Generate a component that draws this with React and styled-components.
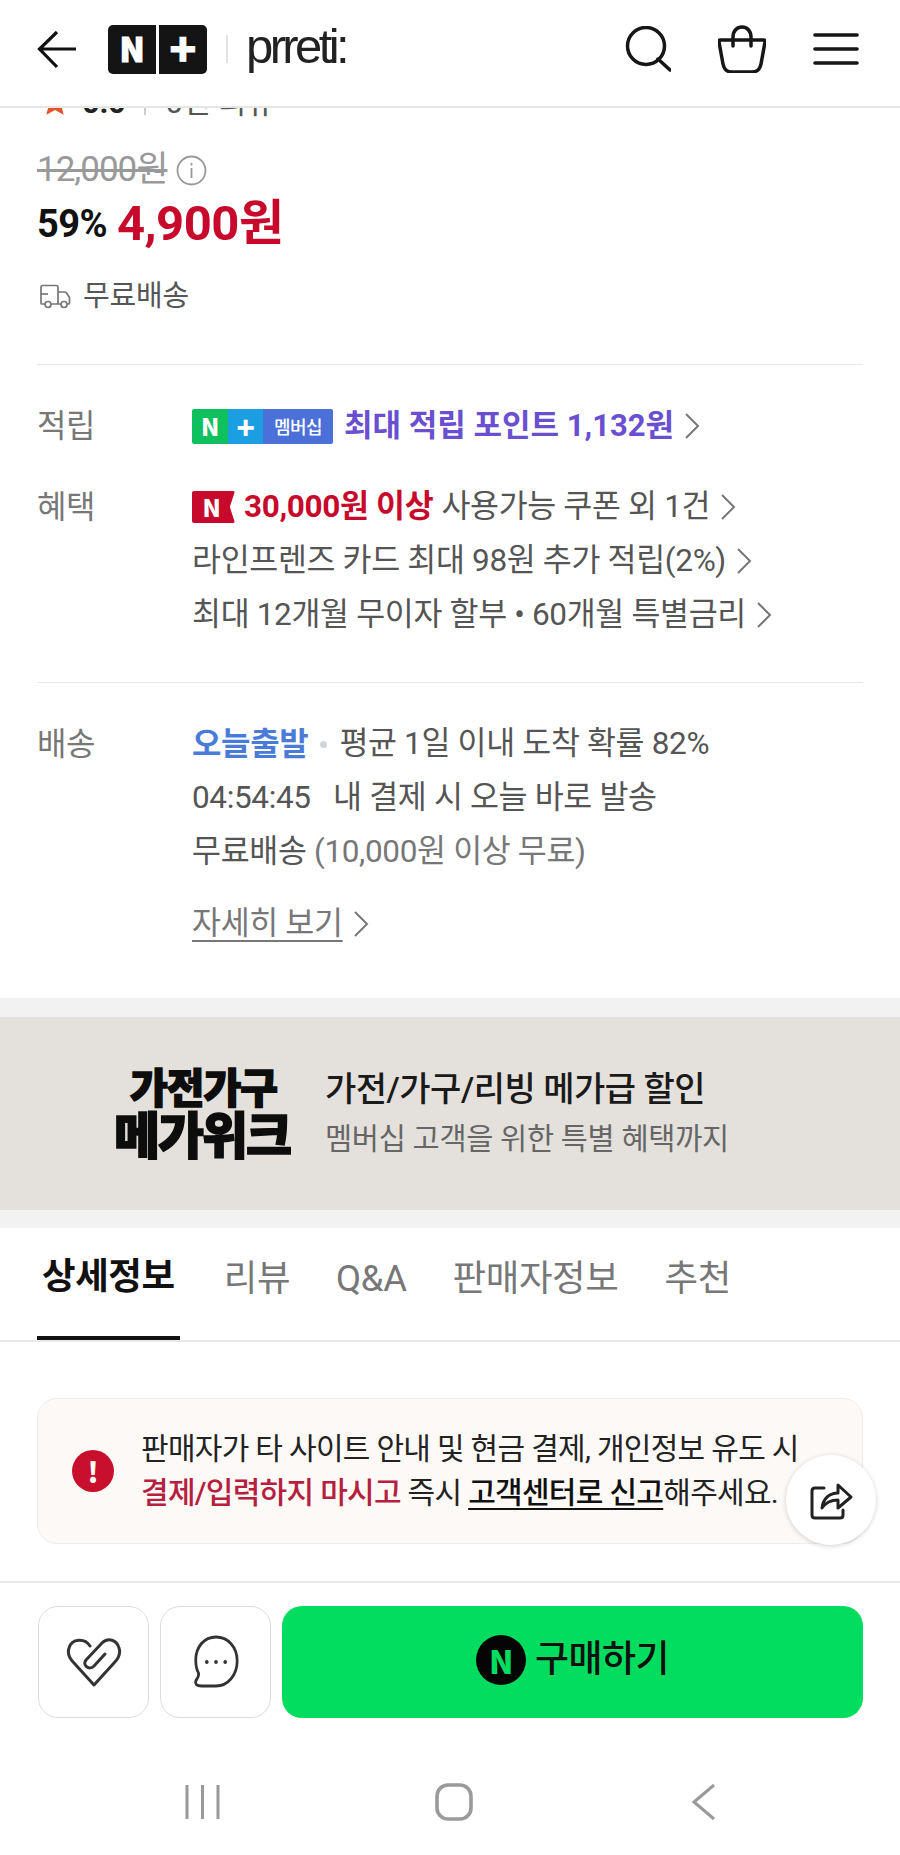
import React from "react";
import styled, { createGlobalStyle } from "styled-components";

const Global = createGlobalStyle`
  html, body { margin: 0; padding: 0; background: #fff; }
  * { box-sizing: border-box; }
  body { font-family: Roboto, "Noto Sans CJK KR", sans-serif; }
`;
const Page = styled.div`
  width: 900px; height: 1855px; display: flex; flex-direction: column; overflow: hidden; background: #fff;
`;
const Header = styled.header`
  height: 108px; flex: none; display: flex; align-items: center; position: relative; z-index: 2;
  background: #fff; border-bottom: 2px solid #e6e6e6; padding: 0 41px 8px 36px;
`;
const BackIcon = styled.svg`width: 42px; height: 40px; flex: none;`;
const LogoBox = styled.div`
  display: flex; gap: 3px; margin-left: 30px; flex: none; height: 49px;
`;
const LogoCell = styled.span`
  width: ${p => p.$w}px; background: #141414; color: #fff; font-weight: 900; font-size: ${p => p.$fs}px; line-height: ${p => p.$lh}px;
  text-align: center; font-family: "Noto Sans CJK KR", sans-serif; -webkit-text-stroke: 1px #fff;
  border-radius: ${p => p.$r};
`;
const LogoSep = styled.span`width: 2px; height: 28px; background: #e2e2e2; margin: 0 18px 0 19px; flex: none;`;
const Brand = styled.span`
  font-family: "Liberation Sans", sans-serif; font-size: 49px; letter-spacing: -3.6px; color: #222; line-height: 49px; font-weight: 400;
  position: relative; top: -3px;
`;
const HeaderIcons = styled.div`margin-left: auto; display: flex; align-items: center; gap: 47px;`;
const IconSvg = styled.svg`display: block; flex: none;`;

const Main = styled.main`flex: 1; min-height: 0; overflow: hidden;`;
const Rating = styled.div`
  height: 40px; margin-top: -25px; padding-left: 40px; display: flex; align-items: center; gap: 12px;
  font-size: 31px; color: #555; line-height: 40px; letter-spacing: -0.4px;
`;
const Score = styled.b`color: #222; font-weight: 700;`;
const RatingSep = styled.span`width: 2px; height: 24px; background: #ccc; margin: 0 7px;`;
const Price = styled.section`padding: 25px 37px 0; `;
const OldRow = styled.div`display: flex; align-items: center; gap: 9px; height: 44px;`;
const OldPrice = styled.s`font-size: 35px; line-height: 44px; color: #999; letter-spacing: -1px; text-decoration-thickness: 2.5px;`;
const SaleRow = styled.div`display: flex; align-items: center; gap: 10px; height: 60px; margin-top: 2px;`;
const Percent = styled.span`font-size: 38px; line-height: 60px; font-weight: 700; color: #111; letter-spacing: -0.6px;`;
const SalePrice = styled.span`font-size: 49px; line-height: 60px; font-weight: 700; color: #c70a2c; letter-spacing: -0.5px;`;
const ShipRow = styled.div`display: flex; align-items: center; gap: 12px; height: 44px; margin-top: 20px; padding-left: 3px; font-size: 29px; line-height: 44px; color: #555; letter-spacing: -0.2px;`;
const Divider = styled.hr`border: 0; height: 1px; background: #e8e8e8; margin: ${p => p.$m || "0 37px"};`;

const InfoSection = styled.section`padding: 34px 37px ${p => p.$pb}px; display: flex; flex-direction: column; gap: 27px;`;
const Row = styled.div`display: grid; grid-template-columns: 155px 1fr;`;
const Label = styled.div`font-size: 32px; line-height: 54px; color: #777; letter-spacing: -0.4px;`;
const Lines = styled.div`display: flex; flex-direction: column;`;
const Line = styled.div`
  display: flex; align-items: center; height: ${p => p.$h || 54}px; font-size: 31.5px; line-height: 54px; color: #555; white-space: pre;
  letter-spacing: -0.35px; margin-top: ${p => p.$mt || 0}px;
`;
const Purple = styled.span`color: #6a4fd1; font-weight: 700; margin-left: 11px; font-size: 31px; letter-spacing: 0;`;
const Crimson = styled.b`color: #c70a2c; font-weight: 700; margin: 0 8px 0 9px;`;
const Blue = styled.b`color: #4a7bd8; font-weight: 700; font-size: 32px;`;
const Dot = styled.i`width: 7px; height: 7px; border-radius: 50%; background: #cfd6da; margin: 0 12px 0 12px;`;
const Muted = styled.span`color: #777;`;
const MoreLink = styled.span`color: #777; text-decoration: underline; text-underline-offset: 6px; text-decoration-thickness: 2px;`;

const PlusBadge = styled.span`display: inline-flex; height: 35px; border-radius: 2px; overflow: hidden; flex: none;`;
const BadgeCell = styled.span`
  width: ${p => p.$w}px; background: ${p => p.$bg}; color: #fff; display: flex; align-items: center; justify-content: center; line-height: 1;
  font-weight: ${p => p.$fw || 900}; font-size: ${p => p.$fs}px; letter-spacing: -0.5px; font-family: "Noto Sans CJK KR", sans-serif;
`;
const CouponBadge = styled.span`
  width: 43px; height: 32px; background: #c70a2c; color: #fff; display: flex; align-items: center; justify-content: center; padding-right: 4px; line-height: 1;
  font-weight: 900; font-size: 24px; font-family: "Noto Sans CJK KR", sans-serif; border-radius: 2px; flex: none;
  clip-path: polygon(0 0, 100% 0, 88% 50%, 100% 100%, 0 100%);
`;
const Chevron = styled.svg`width: 17px; height: 30px; margin-left: 10px; flex: none;`;

const Band = styled.div`height: ${p => p.$h}px; background: #f2f2f2;`;
const Banner = styled.section`
  height: 193px; background: #e4e0dc; display: grid; grid-template-columns: 325px 1fr; align-items: center;
`;
const BannerMark = styled.div`display: flex; flex-direction: column; align-items: flex-end; color: #0d0d0d; font-weight: 900; line-height: 1; padding-right: 35px; -webkit-text-stroke: 1.5px #0d0d0d;`;
const MarkTop = styled.span`font-size: 41px; letter-spacing: -1px; margin-right: 13px; line-height: 46px;`;
const MarkBottom = styled.span`font-size: 50px; letter-spacing: -2px; line-height: 50px;`;
const BannerText = styled.div`display: flex; flex-direction: column; gap: 6px;`;
const BannerTitle = styled.div`font-size: 34px; font-weight: 500; color: #1a1a1a; letter-spacing: -0.5px; line-height: 44px;`;
const BannerSub = styled.div`font-size: 29.5px; color: #666; letter-spacing: -0.3px; line-height: 44px;`;

const Tabs = styled.nav`height: 114px; display: flex; align-items: stretch; padding: 0 37px; border-bottom: 2px solid #e8e8e8; gap: 42px;`;
const Tab = styled.div`
  height: 112px; padding: 0 ${p => p.$active ? "5px" : "2px"};
  display: flex; align-items: center; padding-bottom: 11px; font-size: 36.5px; line-height: 50px;
  font-weight: ${p => p.$active ? 700 : 400}; color: ${p => p.$active ? "#111" : "#777"}; letter-spacing: -0.4px;
  border-bottom: ${p => p.$active ? "4px solid #111" : "none"};
`;

const NoticeWrap = styled.div`padding: 56px 37px 0;`;
const Notice = styled.div`
  position: relative; height: 146px; background: #fdf9f6; border: 1px solid #f0ece8; border-radius: 20px;
  display: flex; align-items: center; padding-left: 34px; gap: 27px;
`;
const AlertDot = styled.div`
  width: 42px; height: 42px; border-radius: 50%; background: #c8102e; color: #fff; display: flex; align-items: center; justify-content: center; line-height: 1;
  font-size: 28px; font-weight: 900; flex: none; font-family: "Noto Sans CJK KR", sans-serif;
`;
const NoticeText = styled.div`font-size: 30px; line-height: 44px; color: #222; letter-spacing: -0.7px; white-space: pre;`;
const NoticeRed = styled.span`color: #b5203f; font-weight: 500;`;
const NoticeLink = styled.span`font-weight: 500; color: #111; text-decoration: underline; text-decoration-thickness: 2px; text-underline-offset: 5px;`;
const ShareButton = styled.button`
  position: absolute; right: -14px; top: 56px; width: 90px; height: 90px; border-radius: 50%; background: #fff; border: 0; padding: 0;
  box-shadow: 0 1px 5px rgba(0,0,0,.18); display: flex; align-items: center; justify-content: center;
`;

const Bottom = styled.footer`height: 274px; flex: none; border-top: 2px solid #e8e8e8; display: flex; flex-direction: column; background: #fff;`;
const Actions = styled.div`display: flex; padding: 23px 37px 0 38px; height: 137px; gap: 11px;`;
const SquareBtn = styled.button`
  width: 111px; height: 112px; border: 1.5px solid #ddd; background: #fff; border-radius: 20px; padding: 0; display: flex; align-items: center; justify-content: center; flex: none;
`;
const BuyBtn = styled.button`
  flex: 1; height: 112px; border: 0; border-radius: 20px; background: #03dd5f; display: flex; align-items: center; justify-content: center; gap: 9px;
  font: 500 37px/50px Roboto, "Noto Sans CJK KR", sans-serif; letter-spacing: -0.5px; color: #111; padding: 0 0 4px;
`;
const BuyN = styled.span`
  width: 50px; height: 50px; border-radius: 50%; background: #050505; color: #03dd5f; display: flex; align-items: center; justify-content: center; line-height: 1;
  font-weight: 900; font-size: 32px; font-family: "Noto Sans CJK KR", sans-serif;
`;
const SysNav = styled.nav`display: grid; grid-template-columns: 185px 36px 214px 36px 220px 30px; padding-top: 63px; align-items: center;`;
const NavSpacer = styled.span``;

const Right = () => (
  <Chevron viewBox="0 0 17 30"><path d="M2 3l12 12L2 27" fill="none" stroke="#777" strokeWidth="2" /></Chevron>
);

export default function App() {
  return (
    <Page>
      <Global />
      <Header>
        <BackIcon viewBox="0 0 42 40"><path d="M40 20H4M21 3L3.5 20 21 38" fill="none" stroke="#111" strokeWidth="3.2" /></BackIcon>
        <LogoBox>
          <LogoCell $w={48} $fs={33} $lh={46} $r="5px 0 0 5px">N</LogoCell>
          <LogoCell $w={48} $fs={44} $lh={44} $r="0 5px 5px 0">+</LogoCell>
        </LogoBox>
        <LogoSep />
        <Brand>prreti:</Brand>
        <HeaderIcons>
          <IconSvg width="46" height="46" viewBox="0 0 46 46" fill="none" stroke="#161616" strokeWidth="3.5" strokeLinecap="round">
            <circle cx="21" cy="20" r="18.5" /><path d="M33 33l12 11" />
          </IconSvg>
          <IconSvg width="48" height="48" viewBox="0 0 48 48" fill="none" stroke="#161616" strokeWidth="3.5" strokeLinecap="round" strokeLinejoin="round">
            <path d="M2 15h44c1 0 1 1 1 2l-4 22c-1 5-4 8-9 8H14c-5 0-8-3-9-8L1 17c0-1 0-2 1-2z" />
            <path d="M15 21V12C15 6 19 2 24 2s9 4 9 10v9" />
          </IconSvg>
          <IconSvg width="46" height="34" viewBox="0 0 46 34" fill="none" stroke="#161616" strokeWidth="3.6" strokeLinecap="round">
            <path d="M2 3h42M2 17h42M2 31h42" />
          </IconSvg>
        </HeaderIcons>
      </Header>
      <Main>
        <Rating>
          <IconSvg width="30" height="28" viewBox="0 0 24 24" preserveAspectRatio="none"><path d="M12 1l3.2 7.2 7.8.8-5.900 5.200 1.800 7.800-6.900-4-6.900 4 1.800-7.800L1 9l7.800-.8z" fill="#e5532d" /></IconSvg>
          <Score>0.0</Score>
          <RatingSep />
          <span>0건 리뷰</span>
        </Rating>
        <Price>
          <OldRow>
            <OldPrice>12,000원</OldPrice>
            <IconSvg width="31" height="31" viewBox="0 0 31 31" fill="none" stroke="#999" strokeWidth="1.8">
              <circle cx="15.5" cy="15.5" r="14" /><path d="M15.5 13v10" /><path d="M15.5 8v2.5" />
            </IconSvg>
          </OldRow>
          <SaleRow>
            <Percent>59%</Percent>
            <SalePrice>4,900원</SalePrice>
          </SaleRow>
          <ShipRow>
            <IconSvg width="31" height="25" viewBox="0 0 31 25" fill="none" stroke="#777" strokeWidth="1.7">
              <path d="M5 20H2c-.6 0-1-.4-1-1V3c0-1 .6-1.500 1.500-1.500h14c1 0 1.500.6 1.500 1.500v16.500M11 20h10M18 8h6.500c1 0 1.500.4 2 1l3 4.500V19c0 .6-.4 1-1 1H27" />
              <path d="M1 10h7" />
              <circle cx="8" cy="20.500" r="3" /><circle cx="24" cy="20.500" r="3" />
            </IconSvg>
            무료배송
          </ShipRow>
        </Price>
        <Divider $m="46px 37px 0" />
        <InfoSection $pb={40}>
          <Row>
            <Label>적립</Label>
            <Lines>
              <Line>
                <PlusBadge>
                  <BadgeCell $w={36} $bg="#0fc05f" $fs={24}>N</BadgeCell>
                  <BadgeCell $w={35} $bg="#1b9ee2" $fs={30}>+</BadgeCell>
                  <BadgeCell $w={70} $bg="#4b70d8" $fs={18} $fw={500}>멤버십</BadgeCell>
                </PlusBadge>
                <Purple>최대 적립 포인트 1,132원</Purple>
                <Right />
              </Line>
            </Lines>
          </Row>
          <Row>
            <Label>혜택</Label>
            <Lines>
              <Line>
                <CouponBadge>N</CouponBadge>
                <Crimson>30,000원 이상</Crimson>
                사용가능 쿠폰 외 1건
                <Right />
              </Line>
              <Line>라인프렌즈 카드 최대 98원 추가 적립(2%)<Right /></Line>
              <Line>최대 12개월 무이자 할부 • 60개월 특별금리<Right /></Line>
            </Lines>
          </Row>
        </InfoSection>
        <Divider />
        <InfoSection $pb={47}>
          <Row>
            <Label>배송</Label>
            <Lines>
              <Line><Blue>오늘출발</Blue><Dot />평균 1일 이내 도착 확률 82%</Line>
              <Line>{"04:54:45   내 결제 시 오늘 바로 발송"}</Line>
              <Line>무료배송 <Muted>(10,000원 이상 무료)</Muted></Line>
              <Line $mt={18}><MoreLink>자세히 보기</MoreLink><Right /></Line>
            </Lines>
          </Row>
        </InfoSection>
        <Band $h={19} />
        <Banner>
          <BannerMark>
            <MarkTop>가전가구</MarkTop>
            <MarkBottom>메가위크</MarkBottom>
          </BannerMark>
          <BannerText>
            <BannerTitle>가전/가구/리빙 메가급 할인</BannerTitle>
            <BannerSub>멤버십 고객을 위한 특별 혜택까지</BannerSub>
          </BannerText>
        </Banner>
        <Band $h={18} />
        <Tabs>
          <Tab $active>상세정보</Tab>
          <Tab>리뷰</Tab>
          <Tab>Q&amp;A</Tab>
          <Tab>판매자정보</Tab>
          <Tab>추천</Tab>
        </Tabs>
        <NoticeWrap>
          <Notice>
            <AlertDot>!</AlertDot>
            <NoticeText>
              판매자가 타 사이트 안내 및 현금 결제, 개인정보 유도 시{"\n"}
              <NoticeRed>결제/입력하지 마시고</NoticeRed> 즉시 <NoticeLink>고객센터로 신고</NoticeLink>해주세요.
            </NoticeText>
            <ShareButton aria-label="공유">
              <IconSvg width="44" height="42" viewBox="0 0 44 42" fill="none" stroke="#222" strokeWidth="3" strokeLinejoin="round" strokeLinecap="round">
                <path d="M15 9H6c-2 0-3 1-3 3v24c0 2 1 3 3 3h25c2 0 3-1 3-3v-5" />
                <path d="M13 29c1-9 7-15 16-15V6l13 12-13 11v-8c-7 0-12 2-16 8z" />
              </IconSvg>
            </ShareButton>
          </Notice>
        </NoticeWrap>
      </Main>
      <Bottom>
        <Actions>
          <SquareBtn aria-label="찜">
            <IconSvg width="56" height="50" viewBox="0 0 56 50" fill="none" stroke="#333" strokeWidth="3" strokeLinecap="round" strokeLinejoin="round">
              <path d="M24 9C19 1 6 1 3 11c-2 6 1 11 5 15l20 22 20-22c4-4 7-9 5-15C51 3 42 0 36 6L20 23c-4 5 3 11 8 6l11-12" />
            </IconSvg>
          </SquareBtn>
          <SquareBtn aria-label="문의">
            <IconSvg width="46" height="54" viewBox="0 0 50 54" preserveAspectRatio="none" fill="none" stroke="#333" strokeWidth="3" strokeLinecap="round" strokeLinejoin="round">
              <path d="M25 2C12 2 3 12 3 25c0 5 1 10 3 13 1 3-2 6-3 8-1 3 1 5 6 5h16c13 0 23-11 23-25S38 2 25 2z" />
              <circle cx="15" cy="27" r="2" fill="#333" stroke="none" /><circle cx="25" cy="27" r="2" fill="#333" stroke="none" /><circle cx="35" cy="27" r="2" fill="#333" stroke="none" />
            </IconSvg>
          </SquareBtn>
          <BuyBtn><BuyN>N</BuyN>구매하기</BuyBtn>
        </Actions>
        <SysNav>
          <NavSpacer />
          <IconSvg width="36" height="36" viewBox="0 0 36 36" stroke="#999" strokeWidth="3" fill="none"><path d="M2 1v34M17.500 1v34M33 1v34" /></IconSvg>
          <NavSpacer />
          <IconSvg width="38" height="38" viewBox="0 0 38 38" stroke="#9a9a9a" strokeWidth="3.6" fill="none"><rect x="2" y="2" width="34" height="34" rx="11" /></IconSvg>
          <NavSpacer />
          <IconSvg width="26" height="38" viewBox="0 0 26 38" stroke="#999" strokeWidth="3" fill="none"><path d="M23 2L3 19l20 17" /></IconSvg>
        </SysNav>
      </Bottom>
    </Page>
  );
}
